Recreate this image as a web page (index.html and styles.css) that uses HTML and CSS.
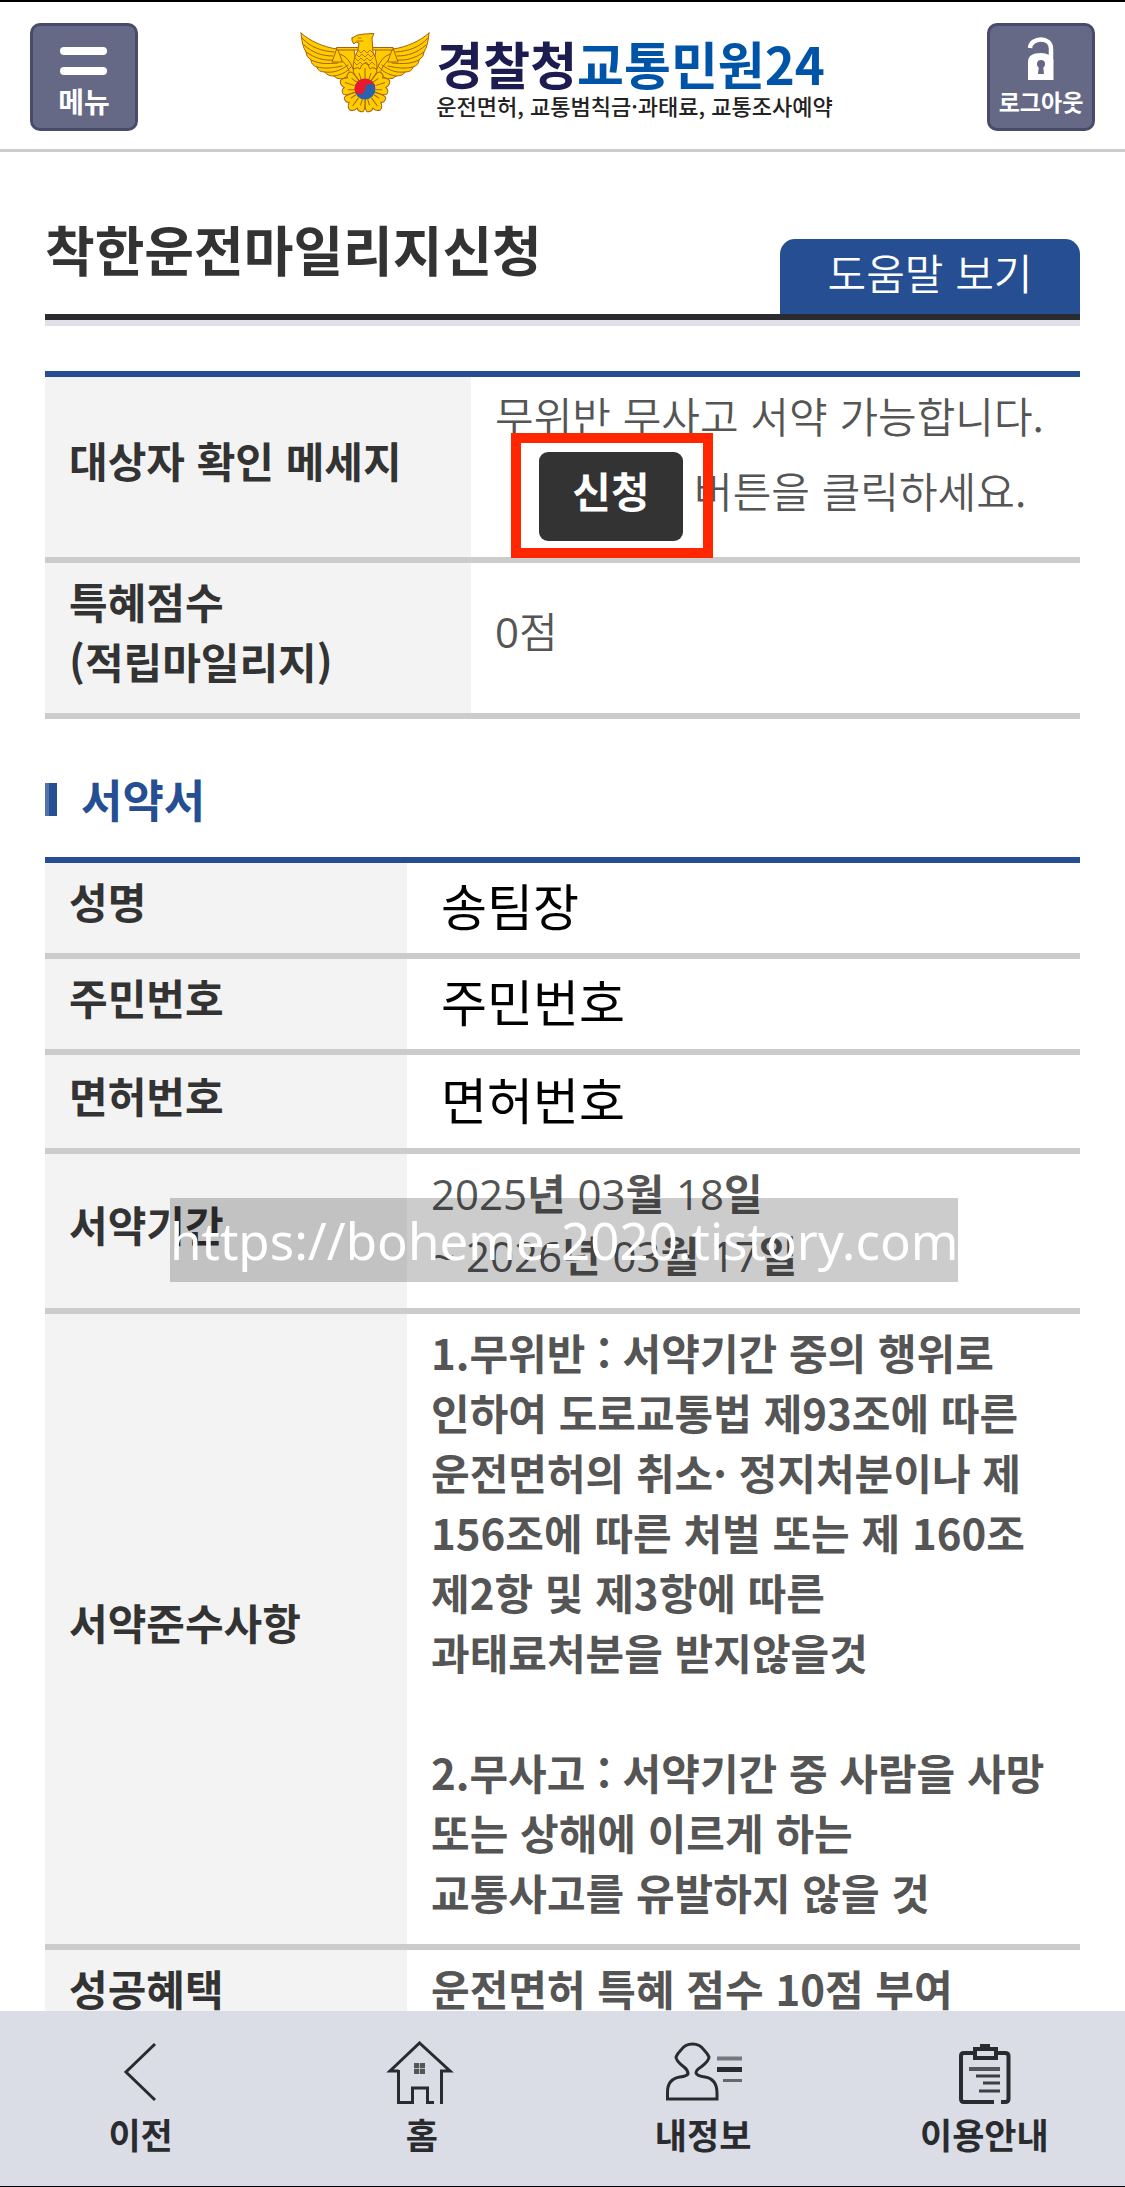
FILE: index.html
```
<!DOCTYPE html>
<html lang="ko">
<head>
  <meta charset="UTF-8">
  <title>착한운전마일리지신청 - 경찰청교통민원24</title>
  <meta name="viewport" content="width=device-width, initial-scale=1.0">
  <link rel="stylesheet" href="styles.css">
</head>
<body>
  <header class="header">
    <button type="button" class="header-btn">
      <svg class="menu-icon" width="48" height="28" viewBox="0 0 48 28" aria-hidden="true">
        <rect x="0" y="0" width="47" height="8" rx="4" fill="#fff"/>
        <rect x="0" y="20" width="47" height="8" rx="4" fill="#fff"/>
      </svg>
      <span class="menu-label">메뉴</span>
    </button>

    <a href="#" class="logo">
      <svg class="emblem" width="130" height="82" viewBox="0 0 130 82" aria-hidden="true">
        <g fill="#fc0" stroke="#a8620c" stroke-width="1" stroke-linejoin="round" stroke-linecap="round">
          <g id="wing">
            <path d="M1 1 C10 9 23 15 37 17 L54 17 L57 40 L42 47 Q36 47 34 44 Q27 44 25 40 Q18 40 17 35 Q11 33 11 28 Q6 25 6 20 Q2 14 1 1Z"/>
            <path d="M2 6 C11 16 22 19 34 20 M4 13 C13 21 22 24 33 24 M6 20 C15 26 23 29 35 28 M11 28 C19 32 27 32 38 31 M17 35 C25 37 33 36 42 34 M25 40 C33 41 40 39 48 33 M34 44 C41 43 47 40 51 35 M40 22 Q49 25 53 37 M39 27 Q46 30 49 39" fill="none"/>
            <path d="M37 16 L32 30 H42 Z"/>
          </g>
          <use href="#wing" transform="translate(130 0) scale(-1 1)"/>
          <path d="M37 15.500H93V18H37Z"/>
          <path d="M52 6 Q57 2 64 2 L74 1.500 L72 6 L73 20 Q79 32 76 39 L54 39 Q51 32 58 18 L59 11 L56 10 L54 12 Q51 9 52 6Z"/>
          <path d="M58 6H61 M57 9H63 M58 18l3 3 3-3 3 3 3-3 3 3 M56 22l3 3 3-3 3 3 3-3 3 3 3-3 M55 26l3 3 3-3 3 3 3-3 3 3 3-3 M54 30l3 3 3-3 3 3 3-3 3 3 3-3 3 3" fill="none" stroke-width=".8"/>
        </g>
        <!-- rose of sharon with taegeuk -->
        <g fill="#fc0" stroke="#a8620c" stroke-width="1" stroke-linejoin="round">
          <g id="petal">
            <path d="M65 57 L55 43 Q51 37 56 36 Q58 35 60 37 Q61 32 65 31 Q69 32 70 37 Q72 35 74 36 Q79 37 75 43Z"/>
            <path d="M65 46V36 M61 47L59 41 M69 47L71 41" fill="none"/>
          </g>
          <use href="#petal" transform="rotate(72 65 57)"/>
          <use href="#petal" transform="rotate(144 65 57)"/>
          <use href="#petal" transform="rotate(216 65 57)"/>
          <use href="#petal" transform="rotate(288 65 57)"/>
        </g>
        <circle cx="65" cy="57" r="10.500" fill="#2b62ae"/>
        <path d="M54.500 57 A10.500 10.500 0 0 1 75.500 57 A5.250 5.250 0 0 0 65 57 A5.250 5.250 0 0 1 54.500 57Z" fill="#e8192c"/>
      </svg>
      <span class="logo-text">
        <strong class="logo-name">경찰청<em>교통민원24</em></strong>
        <span class="logo-sub">운전면허, 교통범칙금·과태료, 교통조사예약</span>
      </span>
    </a>

    <button type="button" class="header-btn">
      <svg class="lock-icon" width="28" height="44" viewBox="0 0 28 44" aria-hidden="true">
        <path d="M3 11 C4 0 24 -1 24 12 V24" fill="none" stroke="#fff" stroke-width="4.500"/>
        <path d="M1 43 V25 Q1 16 14 16 Q23 16 26.500 23 V43Z" fill="#fff"/>
        <circle cx="14" cy="27" r="4" fill="#666985"/>
        <path d="M12 28h4l1 9h-6Z" fill="#666985"/>
      </svg>
      <span class="logout-label">로그아웃</span>
    </button>
  </header>

  <main class="content">
    <div class="title-bar">
      <h1>착한운전마일리지신청</h1>
      <a href="#" class="help-btn">도움말 보기</a>
    </div>

    <table class="info-table check-table">
      <tr>
        <th scope="row">대상자 확인 메세지</th>
        <td>
          무위반 무사고 서약 가능합니다.<br>
          <span class="apply"><button type="button" class="apply-btn">신청</button></span>버튼을 클릭하세요.
        </td>
      </tr>
      <tr>
        <th scope="row">특혜점수<br>(적립마일리지)</th>
        <td><span class="num">0</span>점</td>
      </tr>
    </table>

    <h2>서약서</h2>

    <div class="pledge">
      <table class="info-table pledge-table">
        <tr>
          <th scope="row">성명</th>
          <td class="value">송팀장</td>
        </tr>
        <tr>
          <th scope="row">주민번호</th>
          <td class="value">주민번호</td>
        </tr>
        <tr class="license">
          <th scope="row">면허번호</th>
          <td class="value">면허번호</td>
        </tr>
        <tr class="period">
          <th scope="row">서약기간</th>
          <td><span class="num">2025</span>년 <span class="num">03</span>월 <span class="num">18</span>일<br><span class="num">~ 2026</span>년 <span class="num">03</span>월 <span class="num">17</span>일</td>
        </tr>
        <tr>
          <th scope="row">서약준수사항</th>
          <td>
            1.무위반 : 서약기간 중의 행위로<br>
            인하여 도로교통법 제93조에 따른<br>
            운전면허의 취소· 정지처분이나 제<br>
            156조에 따른 처벌 또는 제 160조<br>
            제2항 및 제3항에 따른<br>
            과태료처분을 받지않을것<br>
            <br>
            2.무사고 : 서약기간 중 사람을 사망<br>
            또는 상해에 이르게 하는<br>
            교통사고를 유발하지 않을 것
          </td>
        </tr>
        <tr>
          <th scope="row">성공혜택</th>
          <td>운전면허 특혜 점수 10점 부여</td>
        </tr>
      </table>
      <div class="watermark">https://boheme-2020.tistory.com</div>
    </div>
  </main>

  <nav class="bottom-nav">
    <a href="#">
      <svg width="80" height="64" viewBox="0 0 80 64" aria-hidden="true">
        <path d="M54 3 L25 31 L54 59"/>
      </svg>
      이전
    </a>
    <a href="#">
      <svg width="80" height="64" viewBox="0 0 80 64" aria-hidden="true">
        <path d="M16.500 30 H8 L37.500 2 L68 30 H59.500 V63 M16.500 29 V61.500 H30.500 V47 H45.500 V61.500 H52"/>
        <path d="M32 22h11v11h-11Z" fill="#555" stroke="none"/>
        <path d="M37.500 22v11 M32 27.500h11" stroke="#b5b7c0" stroke-width="1"/>
      </svg>
      홈
    </a>
    <a href="#">
      <svg width="80" height="64" viewBox="0 0 80 64" aria-hidden="true">
        <path d="M25 33 Q25 29 21 26 Q13 20 13 16 Q14 13 18 9 Q22 3 29.500 3 Q37 3 41 9 Q45 13 46 16 Q46 20 38 26 Q33 29 33 32 Q34 35 42 36 Q54 38 54 52 V58 H4.500 V52 Q4 38 17 36 Q24 35 25 33Z"/>
        <path d="M54 17.500 H79" stroke="#77787f" stroke-width="4"/>
        <path d="M54 28.500 H79" stroke-width="5"/>
        <path d="M60 39.500 H79" stroke="#66676d"/>
      </svg>
      내정보
    </a>
    <a href="#">
      <svg width="80" height="64" viewBox="0 0 80 64" aria-hidden="true">
        <path d="M30 12 H20 Q17 12 17 15 V58 Q17 61 20 61 H50 M57 61 H61 Q64.500 61 64.500 58 V15 Q64.500 12 61 12 H53" stroke-width="4"/>
        <path d="M31 8 H52 V17 H31Z" stroke-width="4"/>
        <path d="M36 5 H46" stroke-width="4"/>
        <path d="M25 28 H56" stroke="#55565c" stroke-width="4"/>
        <path d="M32 35 H56 M39 42 H56 M35 50 H56" stroke="#3d3e42"/>
      </svg>
      이용안내
    </a>
  </nav>
</body>
</html>
```
FILE: styles.css
```
* {
  margin: 0;
  padding: 0;
  box-sizing: border-box;
}

body {
  font-family: 'Noto Sans CJK KR', sans-serif;
  font-size: 42px;
  line-height: 60px;
  color: #555;
  background: #fff;
  min-height: 100vh;
  border-top: 2px solid #000;
}

a {
  text-decoration: none;
}

/* header */
.header {
  display: flex;
  justify-content: space-between;
  align-items: flex-start;
  height: 150px;
  padding: 21px 30px 0;
  border-bottom: 3px solid #ccc;
}

.header-btn {
  display: flex;
  flex-direction: column;
  align-items: center;
  width: 108px;
  height: 108px;
  background: #666985;
  border: 3px solid #494b6b;
  border-radius: 10px;
  color: #fff;
  font-family: inherit;
  font-weight: 700;
  line-height: 36px;
  cursor: pointer;
}

.menu-icon {
  margin-top: 21px;
}

.menu-label {
  margin-top: 8px;
  font-size: 28px;
}

.lock-icon {
  margin-top: 11px;
}

.logout-label {
  margin-top: 2px;
  font-size: 23px;
}

.logo {
  display: flex;
  gap: 6px;
  margin: 9px 0 0 8px;
}

.logo-text {
  display: flex;
  flex-direction: column;
}

.logo-name {
  font-size: 51px;
  font-weight: 700;
  line-height: 62px;
  color: #1c1c50;
}

.logo-name em {
  font-style: normal;
  color: #0054a8;
}

.logo-sub {
  font-size: 22px;
  font-weight: 500;
  line-height: 22px;
  color: #222;
}

/* content */
.content {
  padding: 70px 45px 0;
}

.title-bar {
  display: flex;
  justify-content: space-between;
  align-items: flex-end;
  border-bottom: 6px solid #2a2b2f;
  box-shadow: 0 6px 0 #e0e1e8;
}

.title-bar h1 {
  font-size: 54px;
  font-weight: 700;
  line-height: 54px;
  color: #333;
  padding-bottom: 38px;
}

.help-btn {
  width: 300px;
  height: 75px;
  background: #254e93;
  border-radius: 15px 15px 0 0;
  color: #fff;
  font-weight: 350;
  line-height: 66px;
  text-align: center;
}

h2 {
  display: flex;
  align-items: center;
  gap: 24px;
  margin: 50px 0 28px;
  font-size: 45px;
  font-weight: 700;
  line-height: 60px;
  color: #254e93;
}

h2::before {
  content: '';
  width: 8px;
  height: 33px;
  background: #254e93;
  border-left: 4px solid #5273a8;
}

.info-table {
  width: 100%;
  border-collapse: separate;
  border-spacing: 0;
  border-top: 6px solid #254e93;
}

.info-table th,
.info-table td {
  padding: 8px 0 22px 24px;
  border-bottom: 6px solid #ccc;
  text-align: left;
  vertical-align: middle;
}

.info-table th {
  background: #f3f3f3;
  color: #333;
  font-weight: 700;
}

.check-table {
  margin-top: 51px;
}

.check-table th {
  width: 426px;
}

.check-table td {
  font-weight: 350;
}

.pledge-table th {
  width: 362px;
}

.pledge-table td {
  font-weight: 700;
}

.info-table .num {
  font-family: 'Open Sans', sans-serif;
  font-weight: 400;
}

.pledge-table .value {
  padding: 11px 0 19px 34px;
  color: #000;
  font-size: 50px;
  font-weight: 400;
}

.license {
  height: 99px;
}

.period {
  height: 159px;
}

.apply {
  position: relative;
  display: inline-block;
  margin: 7px 11px -6px 44px;
}

.apply::after {
  content: '';
  position: absolute;
  inset: -19px -30px -17px -28px;
  border: 10px solid #ff2600;
  pointer-events: none;
}

.apply-btn {
  display: block;
  width: 144px;
  padding: 8px 0 21px;
  background: #333;
  border: none;
  border-radius: 9px;
  color: #fff;
  font-family: inherit;
  font-size: 42px;
  font-weight: 700;
  line-height: 60px;
  cursor: pointer;
}

.pledge {
  position: relative;
}

.watermark {
  position: absolute;
  top: 341px;
  left: 125px;
  background: rgba(0, 0, 0, 0.2);
  color: #fff;
  font-family: 'Noto Sans', sans-serif;
  font-size: 51px;
  line-height: 84px;
  white-space: nowrap;
}

/* bottom navigation */
.bottom-nav {
  position: fixed;
  left: 0;
  right: 0;
  bottom: 0;
  display: flex;
  height: 176px;
  padding-top: 30px;
  background: #dadce6;
  border-bottom: 1px solid #000;
}

.bottom-nav a {
  flex: 1;
  display: flex;
  flex-direction: column;
  align-items: center;
  gap: 6px;
  color: #2a2b2e;
  font-size: 35px;
  font-weight: 700;
  line-height: 46px;
}

.bottom-nav svg {
  fill: none;
  stroke: #2a2b2e;
  stroke-width: 3;
}
```
